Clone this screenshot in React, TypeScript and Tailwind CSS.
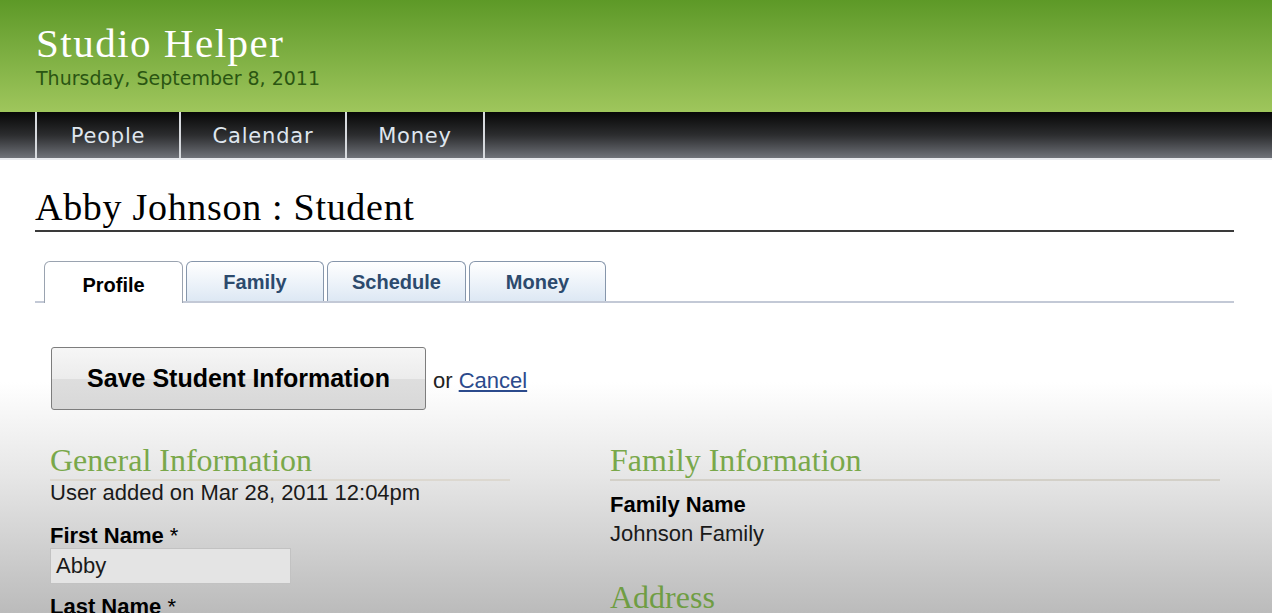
import React from "react";

const serif = { fontFamily: '"Liberation Serif", "Times New Roman", serif' };

export default function App() {
  return (
    <div className="w-[1272px] h-[613px] overflow-hidden flex flex-col bg-white" style={{ fontFamily: '"Liberation Sans", Arial, sans-serif' }}>
      {/* Header */}
      <div className="h-[112px] shrink-0 bg-gradient-to-b from-[#5d9927] to-[#9fc65c] pl-[36px] pt-[21px]">
        <div className="text-white text-[41px] leading-[44px] tracking-[1.5px]" style={serif}>Studio Helper</div>
        <div className="text-[#2a5512] text-[19px] leading-[22px] mt-[2px]" style={{ fontFamily: '"DejaVu Sans", Verdana, sans-serif' }}>
          Thursday, September 8, 2011
        </div>
      </div>
      {/* Nav */}
      <div className="h-[48px] shrink-0 flex bg-gradient-to-b from-[#080808] via-[#2c2d2f] to-[#70737a] border-b-2 border-[#e8eaee] pl-[35px]" style={{ fontFamily: '"DejaVu Sans", Verdana, sans-serif' }}>
        <div className="border-l-2 border-[#d7dade] flex items-center justify-center pt-[3px] w-[144px] text-[#dfe6ee] text-[21px] tracking-[0.8px]">People</div>
        <div className="border-l-2 border-[#d7dade] flex items-center justify-center pt-[3px] w-[166px] text-[#dfe6ee] text-[21px] tracking-[0.8px]">Calendar</div>
        <div className="border-l-2 border-r-2 border-[#d7dade] flex items-center justify-center pt-[3px] w-[140px] text-[#dfe6ee] text-[21px] tracking-[0.8px]">Money</div>
      </div>
      {/* Title + tabs */}
      <div className="shrink-0 ml-[35px] w-[1199px]">
        <div className="pt-[25px] border-b-2 border-[#3a3a3a] h-[72px] box-border">
          <div className="text-[38px] leading-[44px] tracking-[0.7px] text-black" style={serif}>Abby Johnson : Student</div>
        </div>
        <div className="mt-[29px] h-[42px] border-b-2 border-[#c3c9d6] flex items-end pl-[9px] gap-[3px]">
          <div className="w-[139px] h-[42px] -mb-[2px] bg-white border border-b-0 border-[#9aa3b0] rounded-t-[6px] flex items-center justify-center pt-[4px] text-[20px] font-bold text-black">Profile</div>
          <div className="w-[138px] h-[40px] bg-gradient-to-b from-white to-[#dde8f4] border border-b-0 border-[#8696ab] rounded-t-[6px] flex items-center justify-center text-[20px] font-bold text-[#2c4a6d]">Family</div>
          <div className="w-[139px] h-[40px] bg-gradient-to-b from-white to-[#dde8f4] border border-b-0 border-[#8696ab] rounded-t-[6px] flex items-center justify-center text-[20px] font-bold text-[#2c4a6d]">Schedule</div>
          <div className="w-[137px] h-[40px] bg-gradient-to-b from-white to-[#dde8f4] border border-b-0 border-[#8696ab] rounded-t-[6px] flex items-center justify-center text-[20px] font-bold text-[#2c4a6d]">Money</div>
        </div>
      </div>
      {/* Body */}
      <div className="flex-1 bg-[linear-gradient(to_bottom,#ffffff_0%,#ffffff_25%,#e6e6e6_55%,#b9b9b9_100%)] pl-[50px]">
        <div className="mt-[44px] flex items-end">
          <div className="w-[375px] h-[63px] ml-[1px] rounded-[3px] border border-[#7d7d7d] bg-[linear-gradient(to_bottom,#f6f6f6_0%,#ececec_50%,#dedede_51%,#d8d8d8_100%)] flex items-center justify-center pt-[1px] text-[25px] font-bold text-black">
            Save Student Information
          </div>
          <div className="ml-[7px] mb-[16px] text-[22px] leading-[26px] text-[#222]">
            or <span className="underline text-[#2b4a8c]">Cancel</span>
          </div>
        </div>
        <div className="flex mt-[32px]">
          <div className="w-[460px] shrink-0">
            <div className="text-[32px] leading-[36px] text-[#79a84a] border-b-2 border-[#dcd8d0] pb-[1px]" style={serif}>General Information</div>
            <div className="text-[22px] leading-[24px] text-[#1a1a1a]">User added on Mar 28, 2011 12:04pm</div>
            <div className="text-[22px] leading-[24px] font-bold text-black mt-[19px]">First Name <span className="font-normal">*</span></div>
            <div className="w-[241px] h-[36px] border border-[#c2c2c2] bg-[#e4e4e4] text-[22px] text-[#1a1a1a] pl-[5px] leading-[34px]">Abby</div>
            <div className="text-[22px] leading-[24px] font-bold text-black mt-[11px]">Last Name <span className="font-normal">*</span></div>
          </div>
          <div className="ml-[100px] w-[610px]">
            <div className="text-[32px] leading-[36px] text-[#79a84a] border-b-2 border-[#d3d0c8] pb-[1px]" style={serif}>Family Information</div>
            <div className="text-[22px] leading-[24px] font-bold text-black mt-[12px]">Family Name</div>
            <div className="text-[22px] leading-[24px] text-[#1a1a1a] mt-[5px]">Johnson Family</div>
            <div className="text-[32px] leading-[36px] text-[#6f9d43] mt-[33px]" style={serif}>Address</div>
          </div>
        </div>
      </div>
    </div>
  );
}
